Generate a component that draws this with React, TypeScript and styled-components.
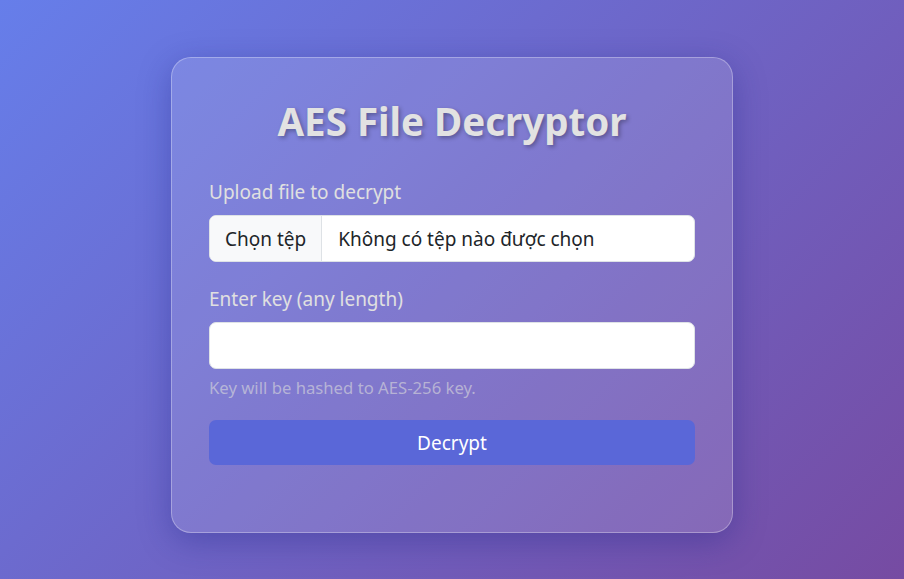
import React, { FC } from 'react'
import styled, { createGlobalStyle } from 'styled-components'

const GlobalStyles = createGlobalStyle`
  * { box-sizing: border-box; }
  html, body { margin: 0; padding: 0; }
  body {
    font-family: 'Noto Sans', 'Open Sans', sans-serif;
    background: linear-gradient(135deg, #667eea 0%, #764ba2 100%);
    min-height: 100vh;
  }
`

const App: FC = () => {
  return (
    <Page>
      <GlobalStyles />
      <Card>
        <Title>AES File Decryptor</Title>
        <Field $gap={24}>
          <Label>Upload file to decrypt</Label>
          <FileBox>
            <FileButton>Chọn tệp</FileButton>
            <FileName>Không có tệp nào được chọn</FileName>
          </FileBox>
        </Field>
        <Field $gap={21}>
          <Label>Enter key (any length)</Label>
          <KeyInput type="password" />
          <Hint>Key will be hashed to AES-256 key.</Hint>
        </Field>
        <SubmitButton>Decrypt</SubmitButton>
      </Card>
    </Page>
  )
}

export default App

const Page = styled.div`
  display: flex;
  justify-content: center;
  align-items: flex-start;
  min-height: 100vh;
  padding-top: 57px;
`

const Card = styled.div`
  width: 562px;
  height: 476px;
  padding: 30px 37px;
  border-radius: 20px;
  background: rgba(255, 255, 255, 0.13);
  border: 1px solid rgba(255, 255, 255, 0.3);
  box-shadow: 0 8px 32px rgba(31, 38, 135, 0.37);
  display: flex;
  flex-direction: column;
`

const Title = styled.h1`
  margin: 7px 0 32px;
  text-align: center;
  font-size: 38.5px;
  font-weight: 700;
  color: #e2e2e2;
  text-shadow: 2px 2px 4px rgba(0, 0, 0, 0.3);
`

const Field = styled.div<{ $gap: number }>`
  display: flex;
  flex-direction: column;
  margin-bottom: ${p => p.$gap}px;
`

const Label = styled.label`
  font-size: 19px;
  color: #e0e0e0;
  margin-bottom: 10px;
`

const FileBox = styled.div`
  display: flex;
  height: 47px;
  background: #fff;
  border: 1px solid #dee2e6;
  border-radius: 7px;
  overflow: hidden;
  font-size: 19px;
  color: #212529;
`

const FileButton = styled.div`
  display: flex;
  align-items: center;
  padding: 0 15px;
  background: #f8f9fa;
  border-right: 1px solid #dee2e6;
`

const FileName = styled.div`
  display: flex;
  align-items: center;
  padding: 0 16px;
`

const KeyInput = styled.input`
  height: 47px;
  border: 1px solid #dee2e6;
  border-radius: 7px;
  background: #fff;
  font-size: 19px;
  padding: 0 16px;
  outline: none;
`

const Hint = styled.div`
  margin-top: 7px;
  font-size: 16.7px;
  color: rgba(220, 220, 220, 0.6);
`

const SubmitButton = styled.button`
  height: 45px;
  border: none;
  border-radius: 7px;
  background: #5a67d8;
  color: #fff;
  font-family: inherit;
  font-size: 19px;
  cursor: pointer;
`
